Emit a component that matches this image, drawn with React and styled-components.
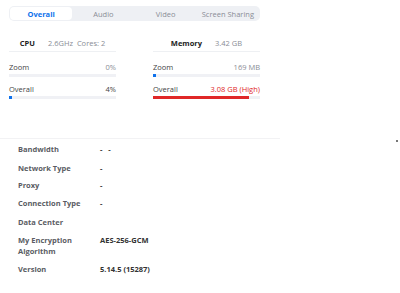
import React from 'react'
import styled, { createGlobalStyle } from 'styled-components'

const GlobalStyle = createGlobalStyle`
  html, body {
    margin: 0;
    padding: 0;
    background: #ffffff;
    font-family: "Open Sans", "Noto Sans", sans-serif;
  }
`

const Page = styled.div`
  position: relative;
  width: 400px;
  height: 293px;
  overflow: hidden;
  background: #fff;
`

const TabBar = styled.div`
  display: flex;
  margin: 6px 0 0 9px;
  width: 251px;
  height: 15px;
  padding: 1px;
  box-sizing: border-box;
  background: #eef0f4;
  border-radius: 5px;
`

const Tab = styled.div`
  flex: 1;
  display: flex;
  align-items: center;
  justify-content: center;
  font-size: 7.5px;
  border-radius: 4px;
  color: ${(p) => (p.active ? '#0e71eb' : '#8a8d96')};
  font-weight: ${(p) => (p.active ? 700 : 400)};
  background: ${(p) => (p.active ? '#ffffff' : 'transparent')};
`

const Stats = styled.div`
  display: flex;
  gap: 37px;
  margin: 13px 0 0 9px;
`

const Column = styled.div`
  width: 107px;
`

const Header = styled.div`
  display: flex;
  justify-content: center;
  align-items: center;
  gap: 13px;
  height: 17px;
  border-bottom: 1px solid #eef0f3;
  font-size: 7.5px;
`

const HeadLabel = styled.span`
  font-weight: 700;
  color: #222;
`

const HeadValue = styled.span`
  color: #8a8d96;
`

const Metric = styled.div`
  margin-top: ${(p) => p.top}px;
`

const MetricLine = styled.div`
  display: flex;
  justify-content: space-between;
  font-size: 7.5px;
  line-height: 10px;
  color: #444;
`

const MetricValue = styled.span`
  color: ${(p) => p.color || '#8a8d96'};
`

const Track = styled.div`
  margin-top: 2px;
  height: 3px;
  background: #f0f1f5;
`

const Fill = styled.div`
  height: 100%;
  background: ${(p) => p.color};
`

const Divider = styled.div`
  width: 280px;
  margin-top: 39px;
  border-top: 1px solid #f2f2f4;
`

const Details = styled.div`
  padding: 5px 0 0 18px;
`

const Row = styled.div`
  display: flex;
  align-items: flex-start;
  min-height: ${(p) => p.h}px;
  font-size: 7.5px;
  line-height: 11px;
  font-weight: 700;
`

const Label = styled.div`
  width: 82px;
  color: #5a5c63;
`

const Value = styled.div`
  color: #333;
  white-space: pre;
`

const Dot = styled.div`
  position: absolute;
  left: 396px;
  top: 140px;
  width: 2px;
  height: 2px;
  background: #777;
`

const tabs = ['Overall', 'Audio', 'Video', 'Screen Sharing']

const details = [
  ['Bandwidth', '-   -', 19],
  ['Network Type', '-', 17],
  ['Proxy', '-', 18],
  ['Connection Type', '-', 19],
  ['Data Center', '', 18],
  ['My Encryption\nAlgorithm', 'AES-256-GCM', 29],
  ['Version', '5.14.5 (15287)', 18],
]

function Bar({ label, value, pct, color, valueColor, top }) {
  return (
    <Metric top={top}>
      <MetricLine>
        <span>{label}</span>
        <MetricValue color={valueColor}>{value}</MetricValue>
      </MetricLine>
      <Track>
        <Fill color={color} style={{ width: pct + '%' }} />
      </Track>
    </Metric>
  )
}

export default function App() {
  return (
    <Page>
      <GlobalStyle />
      <TabBar>
        {tabs.map((t) => (
          <Tab key={t} active={t === 'Overall'}>{t}</Tab>
        ))}
      </TabBar>
      <Stats>
        <Column>
          <Header>
            <HeadLabel>CPU</HeadLabel>
            <HeadValue>2.6GHz&nbsp;&nbsp;Cores: 2</HeadValue>
          </Header>
          <Bar top={10} label="Zoom" value="0%" pct={0} color="#0e71eb" />
          <Bar top={7} label="Overall" value="4%" pct={3} color="#0e71eb" valueColor="#444" />
        </Column>
        <Column>
          <Header>
            <HeadLabel>Memory</HeadLabel>
            <HeadValue>3.42 GB</HeadValue>
          </Header>
          <Bar top={10} label="Zoom" value="169 MB" pct={3} color="#0e71eb" />
          <Bar top={7} label="Overall" value="3.08 GB (High)" pct={90} color="#e02828" valueColor="#e02828" />
        </Column>
      </Stats>
      <Divider />
      <Details>
        {details.map(([l, v, h]) => (
          <Row key={l} h={h}>
            <Label>
              {l.split('\n').map((s) => (
                <div key={s}>{s}</div>
              ))}
            </Label>
            <Value>{v}</Value>
          </Row>
        ))}
      </Details>
      <Dot />
    </Page>
  )
}
